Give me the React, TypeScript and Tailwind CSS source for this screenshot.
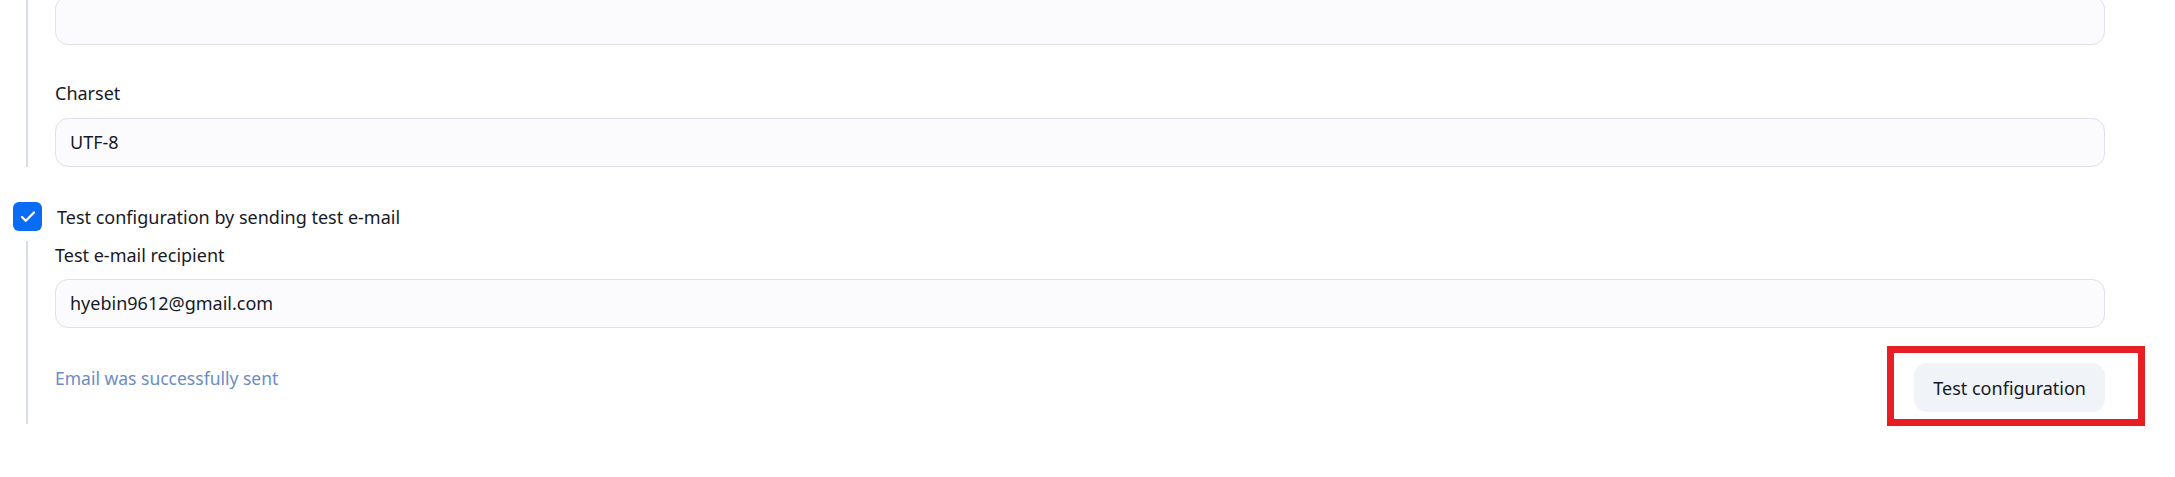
import { Check } from 'lucide-react';

const font = { fontFamily: '"Noto Sans", "Noto Sans CJK KR", sans-serif' };

function Field({ value, className = '' }: { value: string; className?: string }) {
  return (
    <div
      className={`h-[49px] rounded-[13px] border border-[#dce1ec] bg-[#fbfbfd] px-[14px] flex items-center text-[18px] text-[#161a26] ${className}`}
    >
      {value}
    </div>
  );
}

export default function App() {
  return (
    <div className="w-[2175px] h-[477px] bg-white overflow-hidden pr-[70px]" style={font}>
      {/* SMTP settings */}
      <div className="ml-[26px] border-l-2 border-[#d6dcea] pl-[27px]">
        <Field value="" className="-mt-[4px]" />
        <div className="mt-[36px] text-[18px] leading-[24px] text-[#161a26]">Charset</div>
        <Field value="UTF-8" className="mt-[13px]" />
      </div>

      {/* Test toggle */}
      <label className="ml-[13px] mt-[35px] flex items-center gap-[15px] text-[18px] leading-[24px] text-[#161a26]">
        <span className="w-[29px] h-[29px] rounded-[6px] bg-[#0a6cf5] flex items-center justify-center">
          <Check size={18} strokeWidth={3} className="text-white" />
        </span>
        Test configuration by sending test e-mail
      </label>

      <div className="ml-[26px] mt-[10px] border-l-2 border-[#d6dcea] pl-[27px] pt-[2px] pb-[12px]">
        <div className="text-[18px] leading-[24px] text-[#161a26]">Test e-mail recipient</div>
        <Field value="hyebin9612@gmail.com" className="mt-[12px]" />
        <div className="mt-[35px] flex items-start justify-between">
          <div className="mt-[3px] text-[17.5px] leading-[24px] text-[#6b8dc4]">Email was successfully sent</div>
          <div className="relative">
            <button className="h-[49px] px-[19px] rounded-[13px] bg-[#f0f3f7] text-[18px] leading-[24px] text-[#161a26]">
              Test configuration
            </button>
            <div className="absolute left-[-27px] right-[-40px] top-[-17px] bottom-[-14px] border-[7px] border-[#e81e25] pointer-events-none" />
          </div>
        </div>
      </div>
    </div>
  );
}
